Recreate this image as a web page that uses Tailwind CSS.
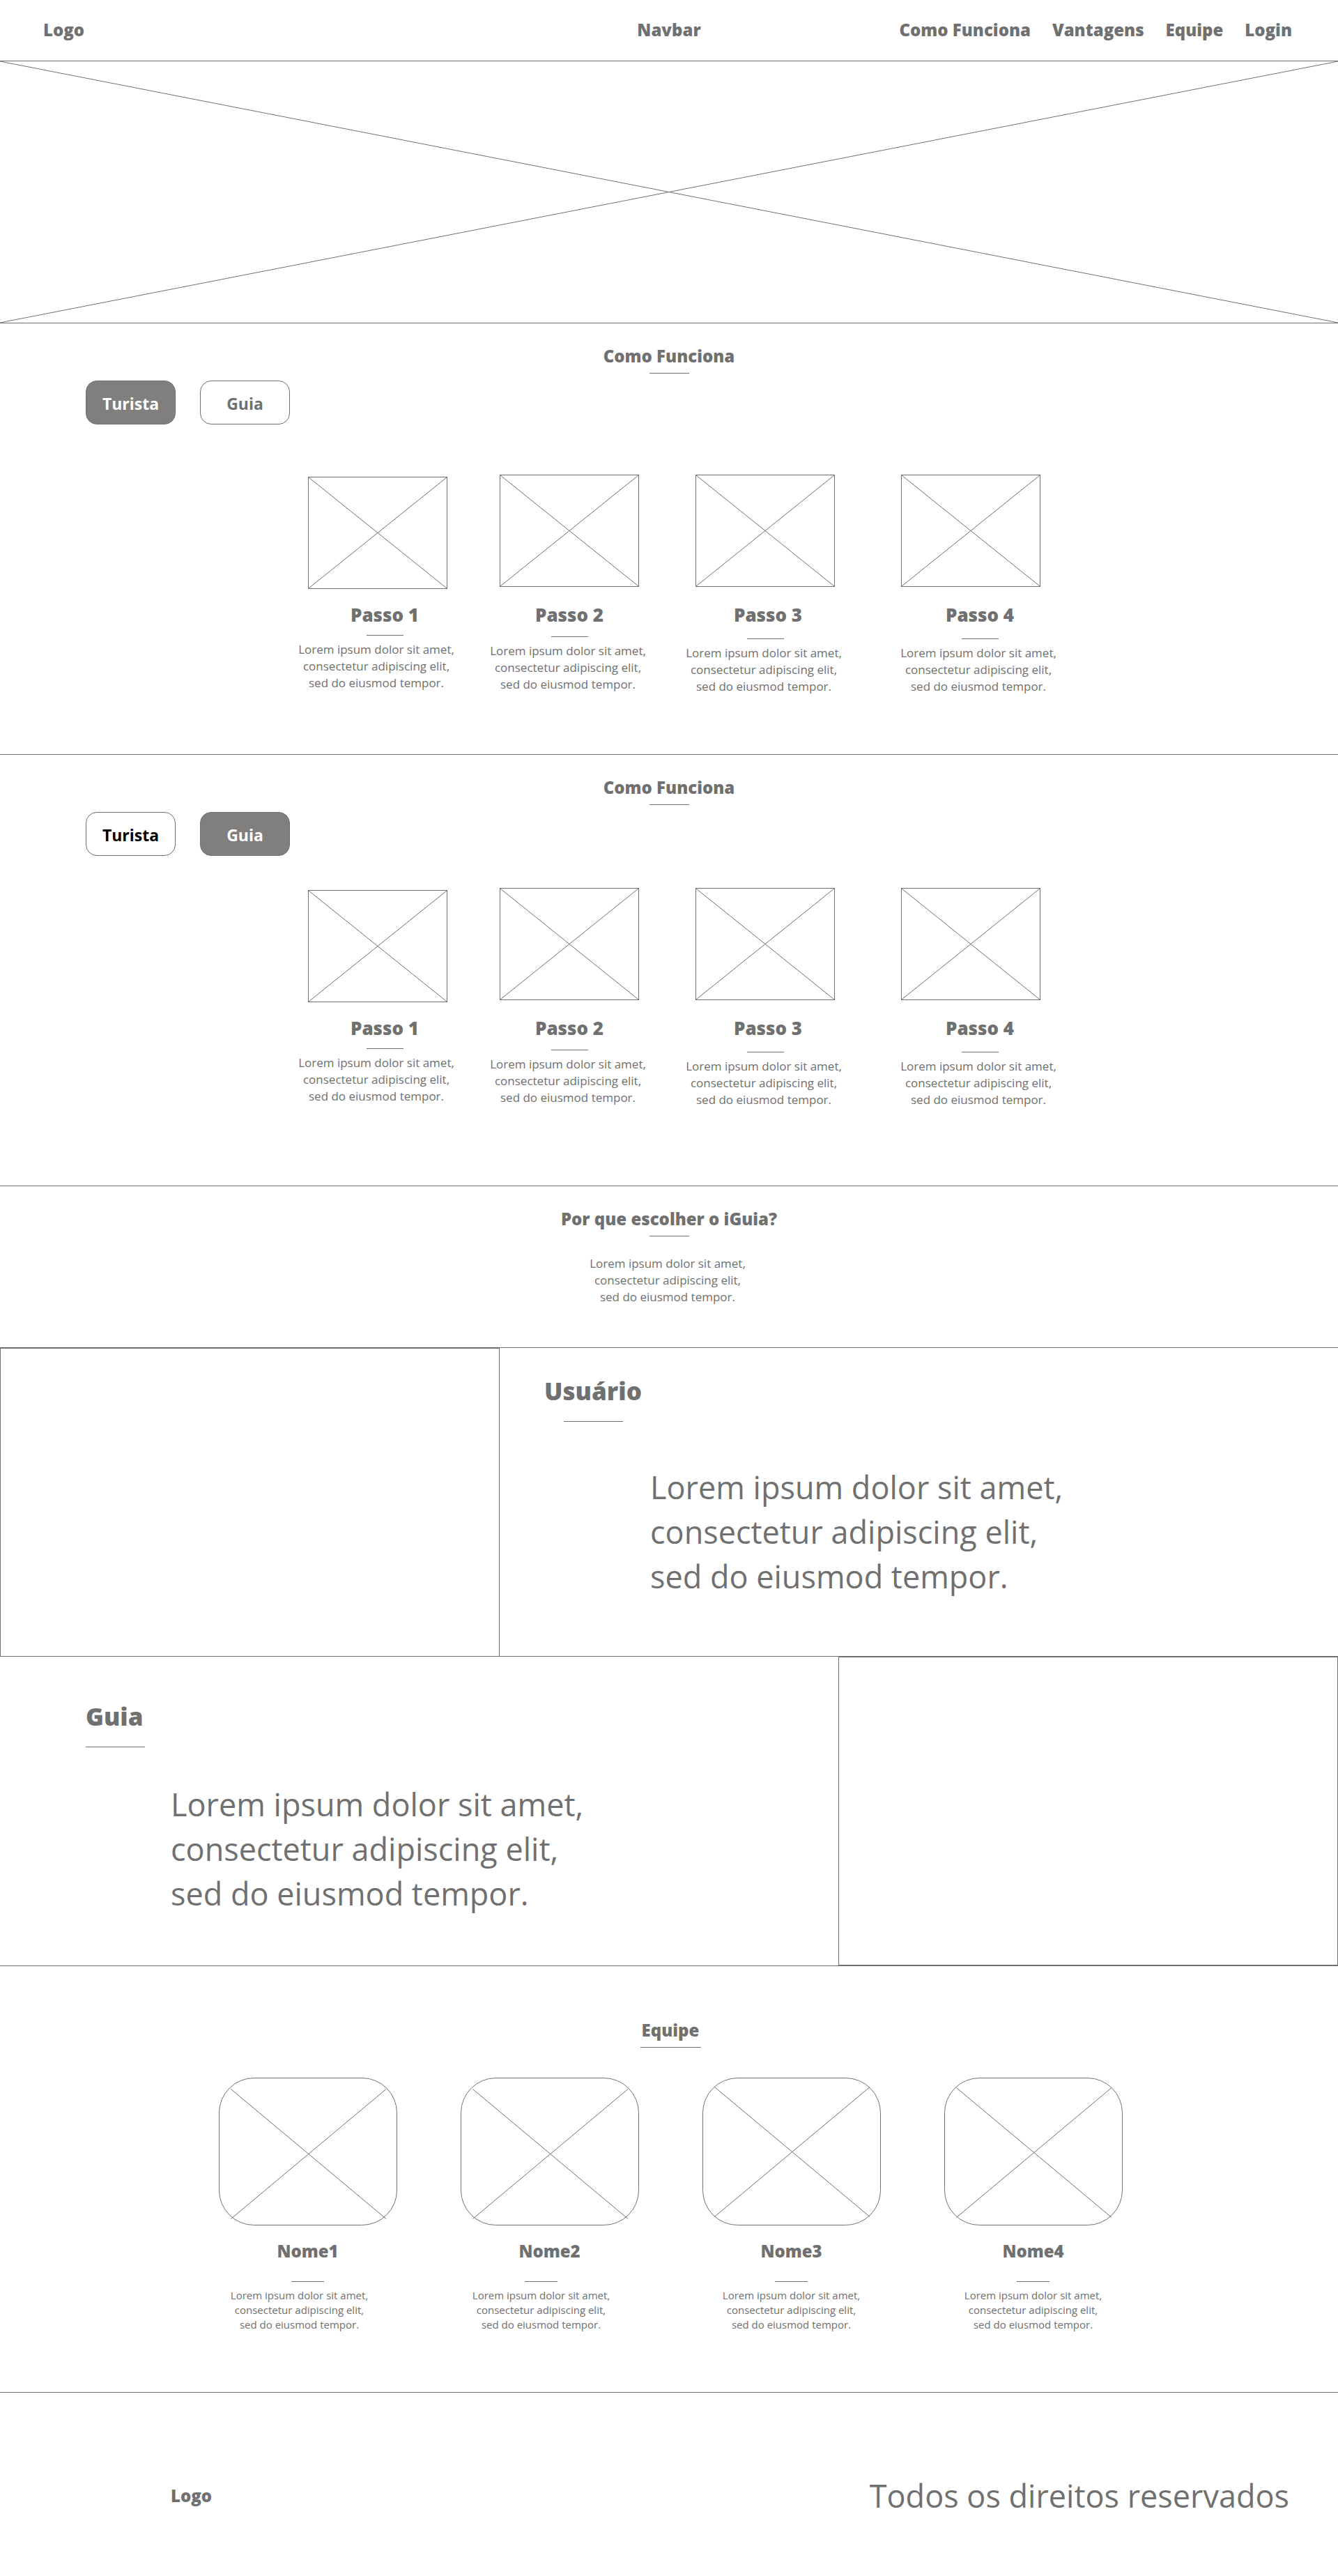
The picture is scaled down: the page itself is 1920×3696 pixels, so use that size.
<!DOCTYPE html>
<html lang="pt-BR">
<head>
<meta charset="utf-8">
<meta name="viewport" content="width=device-width, initial-scale=1">
<title>iGuia</title>
<script src="https://cdn.jsdelivr.net/npm/@tailwindcss/browser@4"></script>
</head>
<body class="bg-white font-['Segoe_UI','Open_Sans',sans-serif] text-[#707070]">

<header class="grid h-[88px] grid-cols-[1fr_auto_1fr] items-center border-b border-[#707070] px-[62px] pb-0.5 text-[24px] leading-8 font-extrabold whitespace-nowrap">
  <a href="#">Logo</a>
  <span>Navbar</span>
  <nav class="flex justify-end gap-[31px] pr-1">
    <a href="#como-funciona">Como Funciona</a>
    <a href="#vantagens">Vantagens</a>
    <a href="#equipe">Equipe</a>
    <a href="#login">Login</a>
  </nav>
</header>

<main>
  <svg class="block h-[376px] w-full border-b border-[#707070]" stroke="#707070" aria-hidden="true"><line x1="0" y1="0" x2="100%" y2="100%"/><line x1="100%" y1="0" x2="0" y2="100%"/></svg>

  <section id="como-funciona" class="border-b border-[#707070] pt-[31px] pb-[85px]">
    <h2 class="text-center text-[24px] leading-8 font-extrabold">Como Funciona</h2>
    <div class="mx-auto mt-2 h-px w-[57px] bg-[#707070]"></div>
    <div class="mt-[10px] flex gap-[35px] pl-[123px]">
      <button type="button" class="h-[63px] w-[129px] rounded-2xl border border-[#707070] bg-[#807f7d] pt-0.5 text-[23px] leading-8 font-bold text-white">Turista</button>
      <button type="button" class="h-[63px] w-[129px] rounded-2xl border border-[#707070] pt-0.5 text-[23px] leading-8 font-bold">Guia</button>
    </div>
    <div class="mt-[72px] flex justify-center pl-6 text-center whitespace-nowrap">
      <article class="flex w-[222px] flex-col items-center pt-[3px]">
        <svg class="ml-1 h-[161px] w-[200px] border border-[#707070]" stroke="#707070" aria-hidden="true"><line x1="0" y1="0" x2="100%" y2="100%"/><line x1="100%" y1="0" x2="0" y2="100%"/></svg>
        <h3 class="mt-[19px] ml-6 text-[26px] leading-9 font-extrabold">Passo 1</h3>
        <div class="mt-[11px] ml-6 h-px w-[53px] bg-[#707070]"></div>
        <p class="mt-2 text-[17px] leading-6">Lorem ipsum dolor sit amet,<br>consectetur adipiscing elit,<br>sed do eiusmod tempor.</p>
      </article>
      <article class="ml-[53px] flex w-[222px] flex-col items-center">
        <svg class="ml-1 h-[161px] w-[200px] border border-[#707070]" stroke="#707070" aria-hidden="true"><line x1="0" y1="0" x2="100%" y2="100%"/><line x1="100%" y1="0" x2="0" y2="100%"/></svg>
        <h3 class="mt-[22px] ml-1 text-[26px] leading-9 font-extrabold">Passo 2</h3>
        <div class="mt-[13px] ml-1 h-px w-[53px] bg-[#707070]"></div>
        <p class="mt-2 text-[17px] leading-6">Lorem ipsum dolor sit amet,<br>consectetur adipiscing elit,<br>sed do eiusmod tempor.</p>
      </article>
      <article class="ml-[59px] flex w-[222px] flex-col items-center">
        <svg class="ml-1 h-[161px] w-[200px] border border-[#707070]" stroke="#707070" aria-hidden="true"><line x1="0" y1="0" x2="100%" y2="100%"/><line x1="100%" y1="0" x2="0" y2="100%"/></svg>
        <h3 class="mt-[22px] ml-3 text-[26px] leading-9 font-extrabold">Passo 3</h3>
        <div class="mt-4 ml-1 h-px w-[53px] bg-[#707070]"></div>
        <p class="mt-2 text-[17px] leading-6">Lorem ipsum dolor sit amet,<br>consectetur adipiscing elit,<br>sed do eiusmod tempor.</p>
      </article>
      <article class="ml-[86px] flex w-[222px] flex-col items-center">
        <svg class="h-[161px] w-[200px] self-start border border-[#707070]" stroke="#707070" aria-hidden="true"><line x1="0" y1="0" x2="100%" y2="100%"/><line x1="100%" y1="0" x2="0" y2="100%"/></svg>
        <h3 class="mt-[22px] ml-1 text-[26px] leading-9 font-extrabold">Passo 4</h3>
        <div class="mt-4 ml-1 h-px w-[53px] bg-[#707070]"></div>
        <p class="mt-2 text-[17px] leading-6">Lorem ipsum dolor sit amet,<br>consectetur adipiscing elit,<br>sed do eiusmod tempor.</p>
      </article>
    </div>
  </section>

  <section class="border-b border-[#707070] pt-[31px] pb-[111px]">
    <h2 class="text-center text-[24px] leading-8 font-extrabold">Como Funciona</h2>
    <div class="mx-auto mt-2 h-px w-[57px] bg-[#707070]"></div>
    <div class="mt-[10px] flex gap-[35px] pl-[123px]">
      <button type="button" class="h-[63px] w-[129px] rounded-2xl border border-[#707070] pt-0.5 text-[23px] leading-8 font-bold text-black">Turista</button>
      <button type="button" class="h-[63px] w-[129px] rounded-2xl border border-[#707070] bg-[#807f7d] pt-0.5 text-[23px] leading-8 font-bold text-white">Guia</button>
    </div>
    <div class="mt-[46px] flex justify-center pl-6 text-center whitespace-nowrap">
      <article class="flex w-[222px] flex-col items-center pt-[3px]">
        <svg class="ml-1 h-[161px] w-[200px] border border-[#707070]" stroke="#707070" aria-hidden="true"><line x1="0" y1="0" x2="100%" y2="100%"/><line x1="100%" y1="0" x2="0" y2="100%"/></svg>
        <h3 class="mt-[19px] ml-6 text-[26px] leading-9 font-extrabold">Passo 1</h3>
        <div class="mt-[11px] ml-6 h-px w-[53px] bg-[#707070]"></div>
        <p class="mt-2 text-[17px] leading-6">Lorem ipsum dolor sit amet,<br>consectetur adipiscing elit,<br>sed do eiusmod tempor.</p>
      </article>
      <article class="ml-[53px] flex w-[222px] flex-col items-center">
        <svg class="ml-1 h-[161px] w-[200px] border border-[#707070]" stroke="#707070" aria-hidden="true"><line x1="0" y1="0" x2="100%" y2="100%"/><line x1="100%" y1="0" x2="0" y2="100%"/></svg>
        <h3 class="mt-[22px] ml-1 text-[26px] leading-9 font-extrabold">Passo 2</h3>
        <div class="mt-[13px] ml-1 h-px w-[53px] bg-[#707070]"></div>
        <p class="mt-2 text-[17px] leading-6">Lorem ipsum dolor sit amet,<br>consectetur adipiscing elit,<br>sed do eiusmod tempor.</p>
      </article>
      <article class="ml-[59px] flex w-[222px] flex-col items-center">
        <svg class="ml-1 h-[161px] w-[200px] border border-[#707070]" stroke="#707070" aria-hidden="true"><line x1="0" y1="0" x2="100%" y2="100%"/><line x1="100%" y1="0" x2="0" y2="100%"/></svg>
        <h3 class="mt-[22px] ml-3 text-[26px] leading-9 font-extrabold">Passo 3</h3>
        <div class="mt-4 ml-1 h-px w-[53px] bg-[#707070]"></div>
        <p class="mt-2 text-[17px] leading-6">Lorem ipsum dolor sit amet,<br>consectetur adipiscing elit,<br>sed do eiusmod tempor.</p>
      </article>
      <article class="ml-[86px] flex w-[222px] flex-col items-center">
        <svg class="h-[161px] w-[200px] self-start border border-[#707070]" stroke="#707070" aria-hidden="true"><line x1="0" y1="0" x2="100%" y2="100%"/><line x1="100%" y1="0" x2="0" y2="100%"/></svg>
        <h3 class="mt-[22px] ml-1 text-[26px] leading-9 font-extrabold">Passo 4</h3>
        <div class="mt-4 ml-1 h-px w-[53px] bg-[#707070]"></div>
        <p class="mt-2 text-[17px] leading-6">Lorem ipsum dolor sit amet,<br>consectetur adipiscing elit,<br>sed do eiusmod tempor.</p>
      </article>
    </div>
  </section>

  <section id="vantagens" class="border-b border-[#707070] pt-[31px] pb-[60px] text-center">
    <h2 class="text-[24px] leading-8 font-extrabold">Por que escolher o iGuia?</h2>
    <div class="mx-auto mt-2 h-px w-[57px] bg-[#707070]"></div>
    <p class="mt-[27px] pr-1 text-[17px] leading-6">Lorem ipsum dolor sit amet,<br>consectetur adipiscing elit,<br>sed do eiusmod tempor.</p>
  </section>

  <section class="flex border-b border-[#707070]">
    <div class="w-[717px] shrink-0 border-x border-t border-[#707070]"></div>
    <div class="pt-[38px] pb-[82px] pl-16 whitespace-nowrap">
      <h2 class="text-[35px] leading-[48px] font-extrabold">Usuário</h2>
      <div class="mt-[19px] ml-7 h-px w-[85px] bg-[#707070]"></div>
      <p class="mt-[62px] ml-[152px] text-[45px] leading-[64px]">Lorem ipsum dolor sit amet,<br>consectetur adipiscing elit,<br>sed do eiusmod tempor.</p>
    </div>
  </section>

  <section class="flex justify-between border-b border-[#707070]">
    <div class="pt-[62px] pb-[71px] pl-[123px] whitespace-nowrap">
      <h2 class="text-[35px] leading-[48px] font-extrabold">Guia</h2>
      <div class="mt-[19px] h-px w-[85px] bg-[#707070]"></div>
      <p class="mt-[50px] ml-[122px] text-[45px] leading-[64px]">Lorem ipsum dolor sit amet,<br>consectetur adipiscing elit,<br>sed do eiusmod tempor.</p>
    </div>
    <div class="w-[717px] shrink-0 border border-[#707070]"></div>
  </section>

  <section id="equipe" class="border-b border-[#707070] pt-[76px] pb-[86px] text-center">
    <div class="pl-1">
      <h2 class="text-[24px] leading-8 font-extrabold">Equipe</h2>
      <div class="mx-auto mt-2 h-px w-[87px] bg-[#707070]"></div>
    </div>
    <div class="mt-[43px] flex justify-center gap-[91px] pl-1 whitespace-nowrap">
      <article class="flex w-64 flex-col items-center">
        <svg class="h-[212px] w-64" viewBox="0 0 256 212" fill="none" stroke="#707070" aria-hidden="true"><rect x=".5" y=".5" width="255" height="211" rx="50"/><path d="M17.500 16.500 240 202.500M240 16.500 17.500 202.500"/></svg>
        <h3 class="mt-[21px] text-[24px] leading-8 font-extrabold">Nome1</h3>
        <div class="mt-[27px] h-px w-[47px] bg-[#707070]"></div>
        <p class="mt-[9px] pr-6 text-[15px] leading-[21px]">Lorem ipsum dolor sit amet,<br>consectetur adipiscing elit,<br>sed do eiusmod tempor.</p>
      </article>
      <article class="flex w-64 flex-col items-center">
        <svg class="h-[212px] w-64" viewBox="0 0 256 212" fill="none" stroke="#707070" aria-hidden="true"><rect x=".5" y=".5" width="255" height="211" rx="50"/><path d="M17.500 16.500 240 202.500M240 16.500 17.500 202.500"/></svg>
        <h3 class="mt-[21px] text-[24px] leading-8 font-extrabold">Nome2</h3>
        <div class="mt-[27px] mr-6 h-px w-[47px] bg-[#707070]"></div>
        <p class="mt-[9px] pr-6 text-[15px] leading-[21px]">Lorem ipsum dolor sit amet,<br>consectetur adipiscing elit,<br>sed do eiusmod tempor.</p>
      </article>
      <article class="flex w-64 flex-col items-center">
        <svg class="h-[212px] w-64" viewBox="0 0 256 212" fill="none" stroke="#707070" aria-hidden="true"><rect x=".5" y=".5" width="255" height="211" rx="50"/><path d="M17.500 13.500 240 199.500M240 13.500 17.500 199.500"/></svg>
        <h3 class="mt-[21px] text-[24px] leading-8 font-extrabold">Nome3</h3>
        <div class="mt-[27px] h-px w-[47px] bg-[#707070]"></div>
        <p class="mt-[9px] text-[15px] leading-[21px]">Lorem ipsum dolor sit amet,<br>consectetur adipiscing elit,<br>sed do eiusmod tempor.</p>
      </article>
      <article class="flex w-64 flex-col items-center">
        <svg class="h-[212px] w-64" viewBox="0 0 256 212" fill="none" stroke="#707070" aria-hidden="true"><rect x=".5" y=".5" width="255" height="211" rx="50"/><path d="M17.500 14.500 240 200.500M240 14.500 17.500 200.500"/></svg>
        <h3 class="mt-[21px] text-[24px] leading-8 font-extrabold">Nome4</h3>
        <div class="mt-[27px] h-px w-[47px] bg-[#707070]"></div>
        <p class="mt-[9px] text-[15px] leading-[21px]">Lorem ipsum dolor sit amet,<br>consectetur adipiscing elit,<br>sed do eiusmod tempor.</p>
      </article>
    </div>
  </section>
</main>

<footer class="flex items-center justify-between pt-[116px] pr-[70px] pb-[82px] pl-[245px]">
  <a href="#" class="text-[24px] leading-8 font-extrabold">Logo</a>
  <p class="text-[45px] leading-[64px]">Todos os direitos reservados</p>
</footer>

</body>
</html>
